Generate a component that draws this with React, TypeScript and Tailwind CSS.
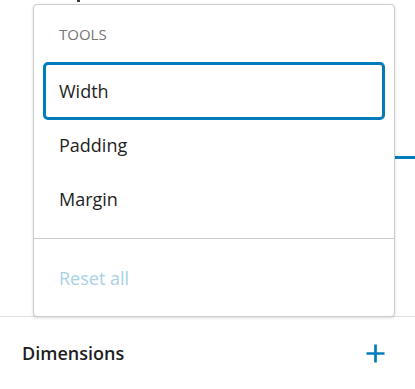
import React from "react";

export default function App() {
  return (
    <div className="relative w-[415px] h-[389px] overflow-hidden bg-white font-['Open_Sans','Noto_Sans',sans-serif] text-[#1e1e1e]">
      {/* background content */}
      <div className="h-[316px] flex flex-col">
        <div className="h-[2px] w-[3px] ml-[77px] bg-[#3a3a3a]" />
        <div className="h-[154px]" />
        <div className="h-[3px] w-[40px] ml-auto bg-[#007cba]" />
      </div>
      <div className="border-t border-[#e0e0e0] h-[73px] flex items-center justify-between pl-[22px] pr-[30px]">
        <span className="text-[18px] font-semibold leading-none">Dimensions</span>
        <svg width="19" height="19" viewBox="0 0 19 19" aria-hidden="true">
          <path d="M9.5 0.5v18M0.5 9.5h18" stroke="#007cba" strokeWidth="2.7" fill="none" />
        </svg>
      </div>

      {/* dropdown menu popover */}
      <div className="absolute left-[33px] top-[4px] w-[362px] bg-white border border-[#cccccc] rounded-[4px] shadow-[0_1px_3px_rgba(0,0,0,0.15)] px-[9px] pt-[10px] pb-[11px]">
        <div className="h-[39px] flex items-center pl-[16px] text-[15px] font-medium uppercase text-[#757575] leading-none">
          Tools
        </div>
        <div className="mt-[10px] flex flex-col">
          <div className="-my-[2px] h-[58px] border-[3px] border-[#007cba] rounded-[5px] flex items-center pl-[13px] text-[18px] leading-none">
            Width
          </div>
          <div className="h-[54px] flex items-center pl-[16px] text-[18px] leading-none">Padding</div>
          <div className="h-[54px] flex items-center pl-[16px] text-[18px] leading-none">Margin</div>
        </div>
        <div className="-mx-[9px] mt-[12px] h-px bg-[#cccccc]" />
        <div className="mt-[12px] h-[54px] flex items-center pl-[16px] text-[18px] leading-none text-[#a9d1e7]">
          Reset all
        </div>
      </div>
    </div>
  );
}
